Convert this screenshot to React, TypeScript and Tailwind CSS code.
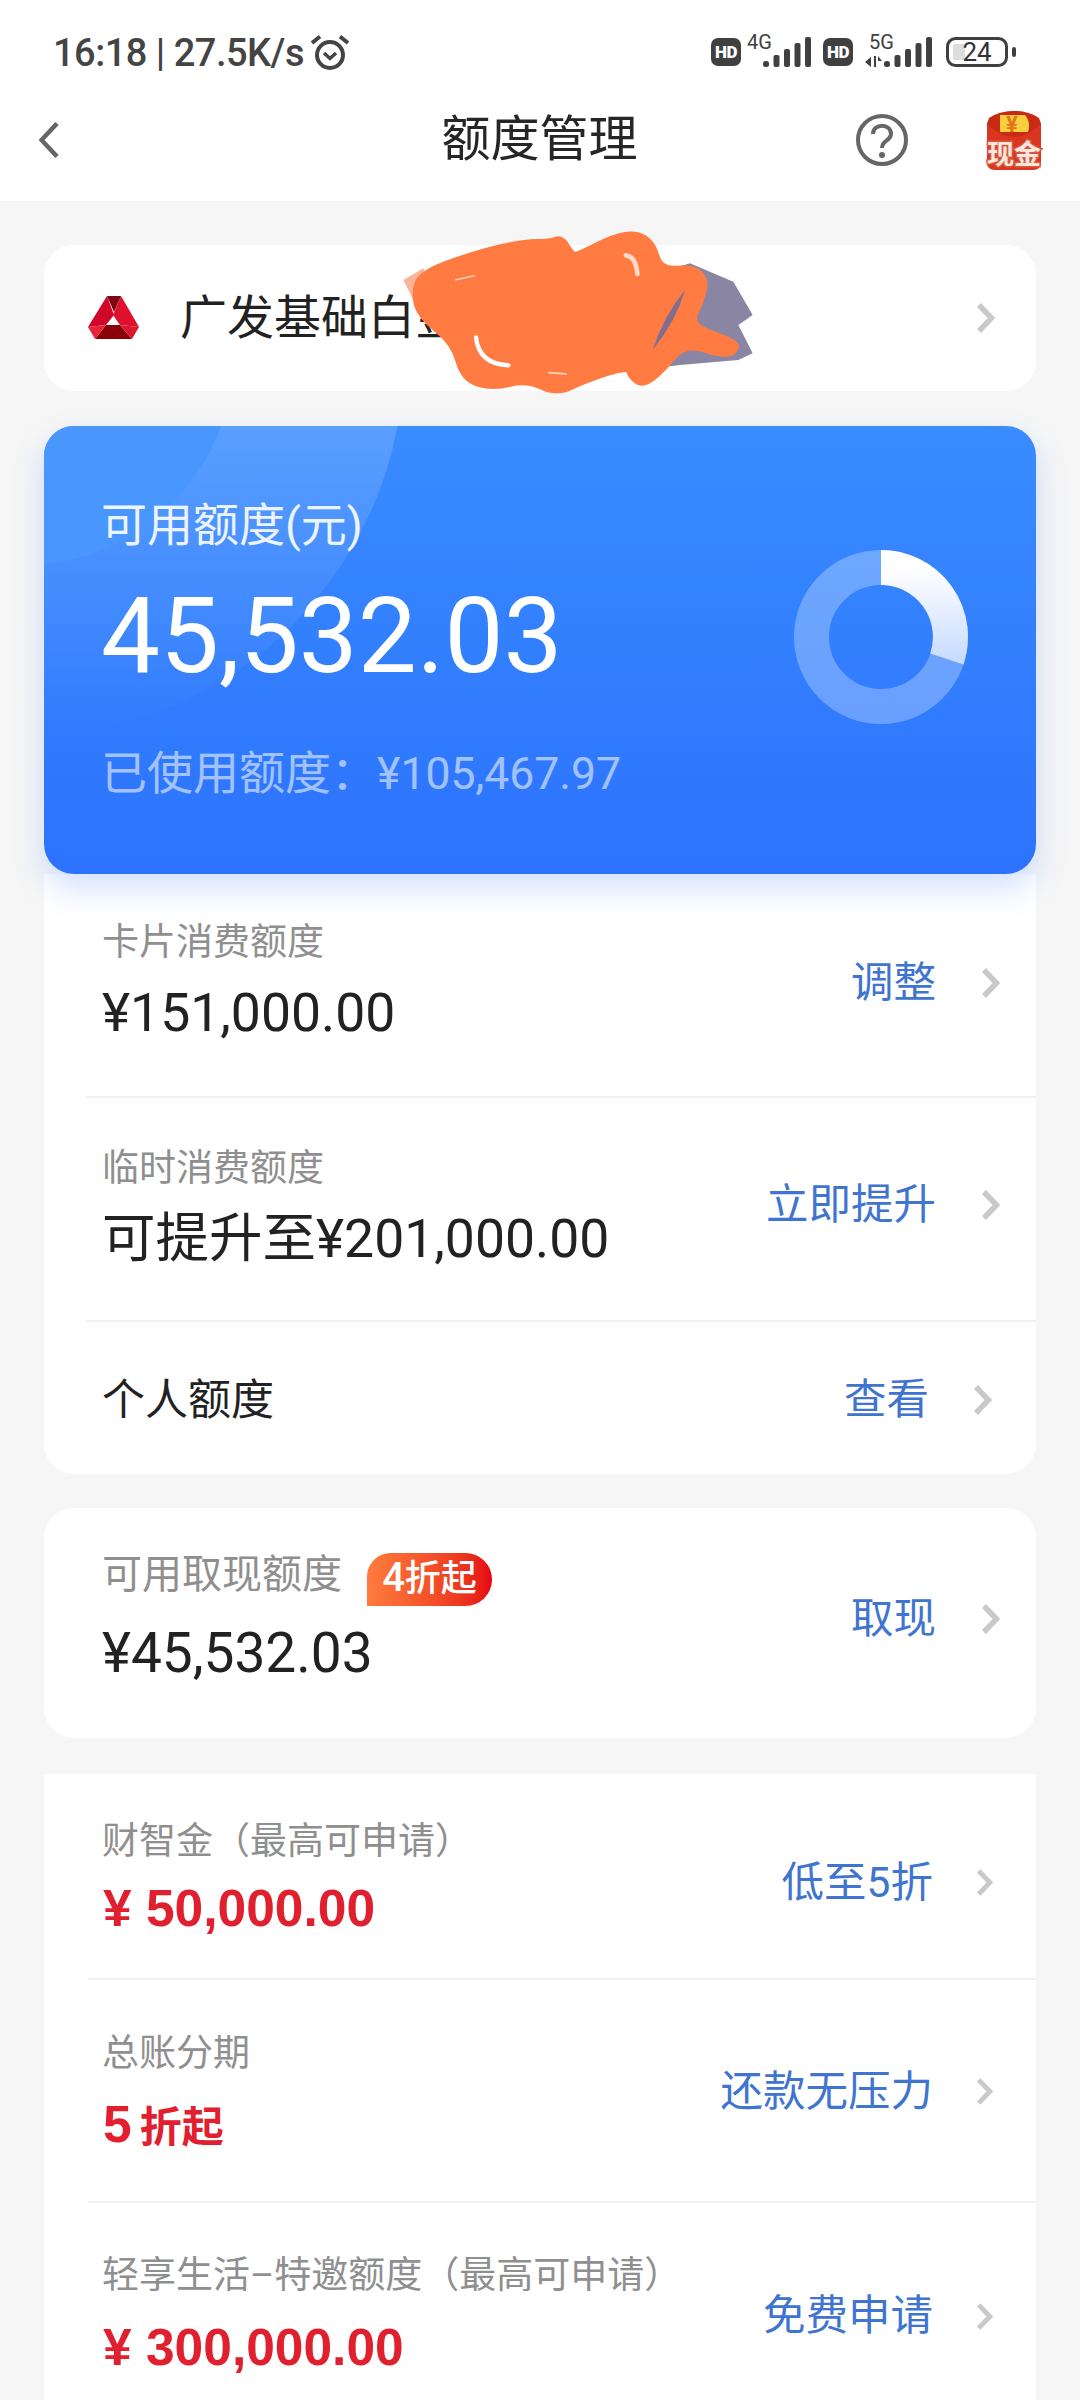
import React from "react";

function Chevron({ className = "w-[19px] h-[30px]" }: { className?: string }) {
  return (
    <svg viewBox="0 0 19 30" className={className + " shrink-0"} fill="none">
      <path d="M3 2 L15.5 15 L3 28" stroke="#c9c9c9" strokeWidth="5.5" />
    </svg>
  );
}

function Bars() {
  return (
    <g fill="#404040">
      <rect x="0" y="24" width="6" height="6" rx="2.5" />
      <rect x="10.5" y="18" width="6" height="12" rx="2" />
      <rect x="21" y="12" width="6" height="18" rx="2" />
      <rect x="31.5" y="6" width="6" height="24" rx="2" />
      <rect x="42" y="0" width="6" height="30" rx="2" />
    </g>
  );
}

function Hd() {
  return (
    <div className="w-[30px] h-[28px] rounded-[7px] bg-[#404040] text-white text-[17px] leading-[28px] font-black text-center tracking-[-0.5px]">
      HD
    </div>
  );
}

function StatusBar() {
  return (
    <div className="h-[84px] pt-[20px] pl-[53px] pr-[64px] flex items-center justify-between text-[#444]">
      <div className="flex items-center gap-[6px]">
        <span className="text-[38px] leading-[64px] font-medium whitespace-pre tracking-[-0.5px] pt-[2px]">16:18 | 27.5K/s</span>
        <svg viewBox="0 0 40 36" className="w-[40px] h-[36px]" fill="none" stroke="#444">
          <circle cx="20" cy="21" r="13" strokeWidth="4" />
          <path d="M14 19 L20 24.5 L26 19" strokeWidth="3.5" />
          <path d="M2 9 L10 2.5 M30 2.5 L38 9" strokeWidth="4" />
        </svg>
      </div>
      <div className="flex items-center">
        <Hd />
        <div className="relative w-[64px] h-[32px] ml-[6px]">
          <span className="absolute left-0 top-[-6px] text-[20px] leading-[24px] text-[#404040]">4G</span>
          <svg viewBox="0 0 64 32" className="w-[64px] h-[32px]">
            <g transform="translate(16 1)"><Bars /></g>
          </svg>
        </div>
        <div className="w-[12px]" />
        <Hd />
        <div className="relative w-[67px] h-[32px] ml-[12px]">
          <span className="absolute left-[4px] top-[-6px] text-[20px] leading-[24px] text-[#404040]">5G</span>
          <svg viewBox="0 0 67 32" className="w-[67px] h-[32px]">
            <path d="M0 26 L6 21 V31 Z M9 20 H11 V31 H9 Z M13 20 L17 25 H13 Z" fill="#404040" />
            <g transform="translate(19 1)"><Bars /></g>
          </svg>
        </div>
        <svg viewBox="0 0 70 30" className="w-[70px] h-[30px] ml-[14px]">
          <rect x="1.5" y="1.5" width="59" height="27" rx="8" fill="none" stroke="#404040" strokeWidth="3" />
          <rect x="7" y="7" width="12" height="16" rx="2" fill="#dedede" />
          <text x="31" y="24" fontSize="26" fill="#333" textAnchor="middle">24</text>
          <rect x="66" y="10" width="4" height="10" rx="2" fill="#404040" />
        </svg>
      </div>
    </div>
  );
}

function NavBar() {
  return (
    <div className="h-[117px] pb-[5px] pl-[39px] pr-[37px] flex items-center">
      <svg viewBox="0 0 20 36" className="w-[20px] h-[36px]" fill="none">
        <path d="M18 1.5 L2.5 18 L18 34.5" stroke="#666" strokeWidth="4.5" />
      </svg>
      <div className="flex-1 text-center text-[#262626] text-[49px] leading-[64px] pl-[164px]">额度管理</div>
      <svg viewBox="0 0 52 52" className="w-[52px] h-[52px]" fill="none">
        <circle cx="26" cy="26" r="24" stroke="#666" strokeWidth="4" />
        <path d="M17 20 C17 9 35 9 35 20 C35 27 26 26 26 34" stroke="#666" strokeWidth="4" />
        <circle cx="26" cy="41" r="3" fill="#666" />
      </svg>
      <svg viewBox="0 0 58 60" className="w-[58px] h-[60px] ml-[77px]">
        <path d="M2 14 Q4 6 14 4 Q29 -2 44 4 Q54 6 56 14 V52 Q56 60 48 60 H10 Q2 60 2 52 Z" fill="#d9351f" />
        <path d="M2 14 Q28 40 56 14 L54 8 Q44 1 29 1 Q14 1 4 8 Z" fill="#c92a16" />
        <path d="M15 5 H40 Q46 12 43 22 H15 Z" fill="#f9d03c" />
        <text x="27" y="22" fontSize="22" fontWeight="700" fill="#e0751c" textAnchor="middle">¥</text>
        <text x="29" y="54" fontSize="27" fontWeight="700" fill="#fde6dd" stroke="#d9553f" strokeWidth="3" paintOrder="stroke" textAnchor="middle">现金</text>
      </svg>
    </div>
  );
}

const blob: [number, number][] = [
  [100, 250], [125, 185], [300, 125], [430, 95], [510, 95], [545, 82], [575, 130], [590, 135], [700, 80], [770, 68], [820, 100], [842, 180],
  [940, 170], [980, 210], [965, 270], [930, 345], [1040, 385], [1078, 408], [1040, 442], [915, 400], [850, 480], [790, 528], [750, 500],
  [745, 470], [620, 510], [530, 553], [440, 510], [340, 535], [250, 510], [220, 400], [120, 320],
];

function smooth(pts: [number, number][]) {
  const mid = (a: [number, number], b: [number, number]) => [(a[0] + b[0]) / 2, (a[1] + b[1]) / 2];
  const start = mid(pts[pts.length - 1], pts[0]);
  let d = `M${start[0]} ${start[1]}`;
  pts.forEach((p, i) => {
    const m = mid(p, pts[(i + 1) % pts.length]);
    d += ` Q${p[0]} ${p[1]} ${m[0]} ${m[1]}`;
  });
  return d + " Z";
}

function Scribble() {
  return (
    <svg viewBox="0 0 1200 600" className="absolute left-[336px] top-[-35px] w-[400px] h-[200px] pointer-events-none">
      <polygon points="930,160 1060,215 1118,315 1075,345 1118,430 1075,450 900,465 740,485 700,300 800,200" fill="#8b85a4" />
      <polygon points="70,210 130,175 180,300 110,290" fill="#fbb49c" />
      <path d={smooth(blob)} fill="#ff7b41" stroke="#ff7b41" strokeWidth="16" strokeLinejoin="round" />
      <path d="M288 382 Q296 462 385 466" fill="none" stroke="#ffffff" strokeWidth="13" strokeLinecap="round" />
      <path d="M738 136 Q768 140 772 192" fill="none" stroke="#ffd9c8" strokeWidth="14" strokeLinecap="round" />
      <path d="M915 240 Q890 330 818 420 Q850 320 915 240 Z" fill="#7f6f8e" />
      <path d="M225 210 L285 197" stroke="#ffd9c8" strokeWidth="4" />
      <path d="M505 488 L560 492" stroke="#ffd9c8" strokeWidth="5" />
    </svg>
  );
}

function Logo() {
  return (
    <svg viewBox="0 0 51 44" className="w-[51px] h-[44px] shrink-0">
      <polygon points="19,0 0,31 18,29 26,19" fill="#d1062b" />
      <polygon points="33,0 51,31 32,29 25,19" fill="#e00f2e" />
      <polygon points="19,0 33,0 26,16" fill="#7e0410" />
      <polygon points="18,29 32,29 44,43 7,43" fill="#8a0208" />
      <polygon points="0,31 18,29 7,43" fill="#e8243a" />
      <polygon points="51,31 32,29 44,43" fill="#d9182f" />
    </svg>
  );
}

function Right({ text, extra = "", gap = "gap-[45px]", pr = "pr-[36px]", chev }: { text: string; extra?: string; gap?: string; pr?: string; chev?: string }) {
  return (
    <div className={"flex items-center shrink-0 " + gap + " " + pr + " " + extra}>
      <span className="text-[42.5px] leading-[60px] text-[#3f74d0]">{text}</span>
      <Chevron className={chev} />
    </div>
  );
}

function Label({ children, h = "h-[60px] leading-[60px]" }: { children: React.ReactNode; h?: string }) {
  return <div className={"text-[37px] text-[#8f8f8f] whitespace-pre " + h}>{children}</div>;
}

function Value({ children }: { children: React.ReactNode }) {
  return <div className="text-[53.5px] leading-[80px] h-[80px] text-[#222]">{children}</div>;
}

function Red({ children, cls = "" }: { children: React.ReactNode; cls?: string }) {
  return (
    <div className={"text-[51.5px] leading-[76px] h-[76px] font-bold text-[#e0202e] font-['Liberation_Sans','Noto_Sans_CJK_SC',sans-serif] whitespace-pre pl-[1px] " + cls}>
      {children}
    </div>
  );
}

function BlueCard() {
  return (
    <div className="relative z-10 mt-[35px] mx-[44px] h-[448px] rounded-[30px] overflow-hidden bg-gradient-to-b from-[#3a8cff] to-[#2c72fd] shadow-[0_14px_32px_rgba(50,120,255,0.22)]">
      <div className="absolute left-[-400px] top-[-450px] w-[760px] h-[760px] rounded-full bg-gradient-to-b from-white/40 to-white/0" />
      <div className="absolute left-[-229px] top-[-279px] w-[418px] h-[418px] rounded-full bg-[#4a96ff]" />
      <div className="relative flex items-start justify-between pl-[57px] pr-[68px]">
        <div className="pt-[69px]">
          <div className="text-[46px] leading-[60px] text-white/90">可用额度(元)</div>
          <div className="mt-[22px] text-[105px] leading-[120px] text-white">45,532.03</div>
          <div className="mt-[46px] text-[44.5px] leading-[60px] text-white/55 whitespace-pre">
            <span className="text-[46px]">已使用额度：</span>¥105,467.97
          </div>
        </div>
        <svg viewBox="0 0 174 174" className="w-[174px] h-[174px] mt-[124px]" fill="none">
          <defs>
            <linearGradient id="arc" x1="0" y1="0" x2="0" y2="1">
              <stop offset="0" stopColor="#ffffff" />
              <stop offset="1" stopColor="#c9dcff" />
            </linearGradient>
          </defs>
          <circle cx="87" cy="87" r="69.5" stroke="#ffffff" strokeOpacity="0.28" strokeWidth="35" />
          <path d="M87 17.5 A69.5 69.5 0 0 1 152.9 109" stroke="url(#arc)" strokeWidth="35" />
        </svg>
      </div>
    </div>
  );
}

export default function App() {
  return (
    <div className="relative w-[1080px] h-[2400px] overflow-hidden bg-[#f6f6f6] font-['Roboto','Noto_Sans_CJK_SC',sans-serif]">
      <div className="bg-white h-[201px]">
        <StatusBar />
        <NavBar />
      </div>

      <div className="relative mt-[44px] mx-[44px] h-[146px] rounded-[30px] bg-white flex items-center pl-[44px] pr-[41px]">
        <Logo />
        <div className="flex-1 ml-[41px] text-[47px] leading-[60px] text-[#222]">广发基础白金</div>
        <Chevron />
        <Scribble />
      </div>

      <BlueCard />

      <div className="mx-[44px] rounded-b-[30px] bg-white">
        <div className="ml-[42px] pl-[16px] h-[224px] pb-[5px] border-b-2 border-[#f0f0f0] flex items-center justify-between">
          <div>
            <Label>卡片消费额度</Label>
            <Value>¥151,000.00</Value>
          </div>
          <Right text="调整" />
        </div>
        <div className="ml-[42px] pl-[16px] h-[224px] pb-[8px] border-b-2 border-[#f0f0f0] flex items-center justify-between">
          <div className="pt-[7px]">
            <Label>临时消费额度</Label>
            <Value>可提升至¥201,000.00</Value>
          </div>
          <Right text="立即提升" />
        </div>
        <div className="ml-[42px] pl-[16px] h-[152px] pt-[4px] flex items-center justify-between">
          <div className="text-[43px] leading-[60px] text-[#222]">个人额度</div>
          <Right text="查看" gap="gap-[44px]" pr="pr-[44px]" />
        </div>
      </div>

      <div className="mt-[34px] mx-[44px] h-[230px] pb-[10px] rounded-[30px] bg-white pl-[58px] flex items-center justify-between">
        <div>
          <div className="flex items-center h-[60px] pt-[2px]">
            <span className="text-[40px] leading-[60px] text-[#8f8f8f]">可用取现额度</span>
            <span className="ml-[25px] mt-[10px] w-[125px] h-[53px] rounded-tl-[24px] rounded-r-[27px] bg-gradient-to-r from-[#ff7b3e] to-[#e60012] text-white text-[36px] leading-[53px] font-medium text-center">
              <span className="text-[40px] leading-none">4</span>折起
            </span>
          </div>
          <div className="mt-[9px] text-[55px] leading-[80px] h-[80px] text-[#222]">¥45,532.03</div>
        </div>
        <Right text="取现" extra="mt-[2px]" />
      </div>

      <div className="mt-[36px] mx-[44px] bg-white">
        <div className="ml-[44px] pl-[14px] h-[206px] pt-[7px] border-b-2 border-[#f0f0f0] flex items-center justify-between">
          <div>
            <Label h="h-[56px] leading-[56px]">财智金（最高可申请）</Label>
            <Red>¥ 50,000.00</Red>
          </div>
          <Right text="低至5折" gap="gap-[43px]" pr="pr-[43px]" chev="w-[17px] h-[27px]" extra="mt-[6px]" />
        </div>
        <div className="ml-[44px] pl-[14px] h-[223px] border-b-2 border-[#f0f0f0] flex items-center justify-between">
          <div className="pt-[4px]">
            <Label>总账分期</Label>
            <Red cls="mt-[2px]">5<span className="text-[42px] ml-[8px]">折起</span></Red>
          </div>
          <Right text="还款无压力" gap="gap-[43px]" pr="pr-[43px]" chev="w-[17px] h-[27px]" extra="mt-[2px]" />
        </div>
        <div className="ml-[44px] pl-[14px] h-[224px] flex items-center justify-between">
          <div>
            <Label>轻享生活–特邀额度（最高可申请）</Label>
            <Red cls="mt-[3px]">¥ 300,000.00</Red>
          </div>
          <Right text="免费申请" gap="gap-[43px]" pr="pr-[43px]" chev="w-[17px] h-[27px]" extra="mt-[2px]" />
        </div>
      </div>
    </div>
  );
}
